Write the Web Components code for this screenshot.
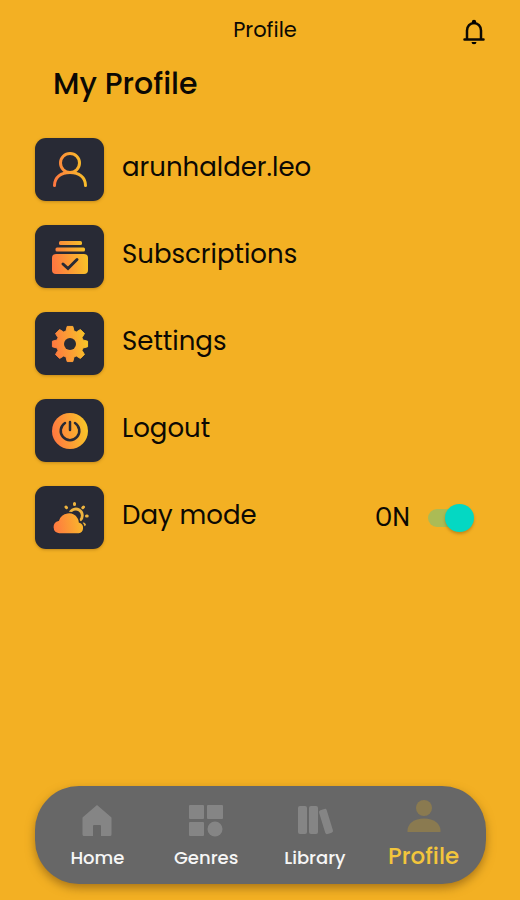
<!DOCTYPE html>
<html lang="en">
<head>
<meta charset="utf-8">
<meta name="viewport" content="width=device-width, initial-scale=1">
<title>Profile</title>
<style>
  html { background: #f3b023; }
  body { margin: 0; color: #0c0904; font-family: Poppins, Inter, "Open Sans", sans-serif; }
</style>
</head>
<body>
<profile-page>
  <page-header slot="header">Profile</page-header>
  <profile-row icon="user">arunhalder.leo</profile-row>
  <profile-row icon="cards">Subscriptions</profile-row>
  <profile-row icon="gear">Settings</profile-row>
  <profile-row icon="power">Logout</profile-row>
  <mode-row icon="weather" label="Day mode"></mode-row>
  <tab-bar slot="footer">
    <tab-item icon="home">Home</tab-item>
    <tab-item icon="grid">Genres</tab-item>
    <tab-item icon="books">Library</tab-item>
    <tab-item icon="person" active>Profile</tab-item>
  </tab-bar>
</profile-page>

<script>
const tileIcons = {
  user: `<g fill="none" stroke="url(#g)" stroke-width="3" stroke-linecap="round">
    <circle cx="20" cy="13" r="9.500"/><path d="M4.500 35.500C4.500 27 11 22.500 20 22.500S35.500 27 35.500 35.500"/></g>`,
  cards: `<g fill="url(#g)"><rect x="9" y="4" width="23" height="4" rx="1.500"/><rect x="5.500" y="10.500" width="29.500" height="4" rx="1.500"/>
    <rect x="2" y="17" width="36" height="20" rx="4"/></g><path d="M13 27l5 4.500 9-9" fill="none" stroke="#282a35" stroke-width="3" stroke-linecap="round"/>`,
  gear: `<path fill="url(#g)" stroke="url(#g)" stroke-linejoin="round" d="${gearPath()}"/><circle cx="20" cy="20" r="6" fill="#282a35"/>`,
  power: `<circle cx="20" cy="20" r="18" fill="url(#g)"/><g fill="none" stroke="#282a35" stroke-width="2.500" stroke-linecap="round">
    <path d="M15 12a9.300 9.300 0 1 0 10 0M20 11v8"/></g>`,
  weather: `<g fill="none" stroke="#eeb43f" stroke-width="2.800"><path d="M19.500 16A6.500 6.500 0 1 1 30 22.500"/>
    <g stroke-linecap="round" stroke-width="3"><path d="M24.500 5.500v1M16 9l.5.7M33.500 9l-.7.7M36.500 18h.7M33.500 26l.8.6"/></g></g>
    <path fill="url(#g)" stroke="#282a35" stroke-width="1.500" d="M9 36a7 7 0 0 1-.6-13.800A11 11 0 0 1 28 19.500q1.500 2 1.500 4.500a6.200 6.200 0 0 1-.7 12Z"/>`
};

const tabIcons = {
  home: `<path d="M16 1 30.500 13.500V30.500a1.500 1.500 0 0 1-1.500 1.500H20V22a1 1 0 0 0-1-1H13a1 1 0 0 0-1 1V32H3a1.500 1.500 0 0 1-1.500-1.500V13.500Z"/>`,
  grid: `<rect x="-1" y="1" width="15" height="14" rx="1"/><rect x="17" y="1" width="16" height="14" rx="1"/>
    <rect x="-1" y="18" width="15" height="14" rx="1"/><circle cx="25" cy="25" r="7.500"/>`,
  books: `<rect x="-1" y="2" width="9" height="28" rx="2"/><rect x="10" y="2" width="9" height="28" rx="2"/>
    <rect x="23" y="5" width="8" height="25" rx="2" transform="rotate(-17 27 17.500)"/>`,
  person: `<circle cx="16" cy="8" r="8"/><path d="M-.5 32v-1.500C-.5 24 6 18.500 16 18.500S32.500 24 32.500 30.500V32Z"/>`
};

function gearPath() {
  const points = [];
  const profile = [[-.30, 13.5], [-.16, 17.8], [.16, 17.8], [.30, 13.5]];
  for (let i = 0; i < 8; i++) {
    for (const [offset, radius] of profile) {
      const angle = i * Math.PI / 4 + offset;
      points.push((20 + radius * Math.cos(angle)).toFixed(2) + " " + (20 + radius * Math.sin(angle)).toFixed(2));
    }
  }
  return "M" + points.join("L") + "Z";
}

class BaseElement extends HTMLElement {
  constructor() { super(); this.attachShadow({ mode: "open" }); }
  connectedCallback() { this.shadowRoot.innerHTML = this.render(); this.ready(); }
  ready() {}
}

customElements.define("profile-page", class extends BaseElement {
  render() {
    return `<style>
      :host { display: flex; flex-direction: column; min-height: 100vh; box-sizing: border-box; padding-bottom: 16px; }
      h1 { margin: 0; padding: 0 53px; font-size: 30px; line-height: 40px; font-weight: 500; }
      main { display: flex; flex-direction: column; gap: 24px; padding: 34px 35px; }
      ::slotted([slot=footer]) { margin-top: auto; }
    </style>
    <slot name="header"></slot><h1>My Profile</h1><main><slot></slot></main><slot name="footer"></slot>`;
  }
});

customElements.define("page-header", class extends BaseElement {
  render() {
    return `<style>
      :host { display: grid; grid-template-columns: 1fr auto 1fr; align-items: center; height: 64px; padding: 0 32px 0 42px; }
      .title { font-size: 21px; line-height: 24px; padding-bottom: 4px; }
      button { justify-self: end; display: flex; padding: 0; border: 0; background: none; color: inherit; cursor: pointer; }
      svg { width: 28px; height: 28px; }
    </style>
    <span></span><span class="title"><slot></slot></span>
    <button type="button" aria-label="Notifications"><svg viewBox="0 0 28 28" aria-hidden="true">
      <path d="M7 21V12.500a7 7.500 0 0 1 14 0V21M4.500 21.500H23.500" fill="none" stroke="currentColor" stroke-width="2.500" stroke-linecap="round"/>
      <circle cx="14" cy="4" r="2.200"/><path d="M11.500 24h5a2.500 2.200 0 0 1-5 0Z"/></svg></button>`;
  }
});

customElements.define("icon-tile", class extends BaseElement {
  render() {
    return `<style>
      :host { display: flex; flex: none; align-items: center; justify-content: center; width: 69px; height: 63px; border-radius: 11px;
        background: #282a35; box-shadow: 0 1px 3px #7a501066; }
      svg { width: 40px; height: 40px; }
    </style>
    <svg viewBox="0 0 40 40" aria-hidden="true"><defs><linearGradient id="g" gradientUnits="userSpaceOnUse" x1="3" y1="24" x2="37" y2="18">
      <stop offset="0" stop-color="#ff7840"/><stop offset="1" stop-color="#f8c428"/></linearGradient></defs>${tileIcons[this.getAttribute("name")]}</svg>`;
  }
});

customElements.define("profile-row", class extends BaseElement {
  render() {
    return `<style>
      :host { display: block; }
      button { display: flex; align-items: center; gap: 18px; width: 100%; padding: 0; border: 0; background: none;
        color: inherit; font: inherit; font-size: 26px; line-height: 32px; text-align: left; cursor: pointer; }
      .text { padding-bottom: 6px; }
    </style>
    <button type="button"><icon-tile name="${this.getAttribute("icon")}"></icon-tile><span class="text"><slot></slot></span></button>`;
  }
});

customElements.define("mode-row", class extends BaseElement {
  render() {
    return `<style>
      :host { display: flex; align-items: center; gap: 18px; }
      label { flex: 1; padding-bottom: 6px; font-size: 26px; line-height: 32px; }
      output { font: 25px/32px Roboto, sans-serif; }
      input { appearance: none; flex: none; display: flex; align-items: center; width: 46px; height: 28px; margin: 0 11px 0 0;
        border-radius: 14px; cursor: pointer; }
      input::before { content: ""; width: 32px; height: 18px; border-radius: 9px; background: #abbb55; }
      input::after { content: ""; flex: none; width: 29px; height: 28px; margin-left: -15px; border-radius: 50%; background: #04d8c3; box-shadow: 0 2px 3px #7a501066; }
      input:not(:checked)::before { order: 2; background: #b58a32; margin-left: -15px; }
      input:not(:checked)::after { position: relative; margin-left: 0; background: #eee; }
    </style>
    <icon-tile name="${this.getAttribute("icon")}"></icon-tile>
    <label for="mode">${this.getAttribute("label")}</label>
    <output for="mode">ON</output>
    <input type="checkbox" role="switch" id="mode" checked>`;
  }
  ready() {
    const input = this.shadowRoot.querySelector("input");
    const output = this.shadowRoot.querySelector("output");
    input.addEventListener("change", () => { output.textContent = input.checked ? "ON" : "OFF"; });
  }
});

customElements.define("tab-bar", class extends BaseElement {
  render() {
    return `<style>
      :host { display: block; margin: 0 34px 0 35px; }
      nav { display: grid; grid-template-columns: repeat(4, 1fr); height: 98px; padding: 0 8px; border-radius: 44px;
        background: #676767; box-shadow: 0 4px 10px #7a501099; }
    </style><nav aria-label="Main"><slot></slot></nav>`;
  }
});

customElements.define("tab-item", class extends BaseElement {
  render() {
    const current = this.hasAttribute("active") ? ' aria-current="page"' : "";
    return `<style>
      :host { display: block; }
      a { display: flex; flex-direction: column; align-items: center; gap: 8px; padding-top: 18px; color: #f6f6f6; text-decoration: none;
        font-size: 18px; line-height: 24px; font-weight: 500; }
      svg { width: 34px; height: 34px; overflow: visible; fill: #858585; }
      :host([active]) a { gap: 10px; padding-top: 14px; color: #f2c53c; font-size: 23px; }
      :host([active]) svg { fill: #8a7a50; }
    </style>
    <a href="#"${current}><svg viewBox="-1 0 34 34" aria-hidden="true">${tabIcons[this.getAttribute("icon")]}</svg><span><slot></slot></span></a>`;
  }
});
</script>
</body>
</html>
